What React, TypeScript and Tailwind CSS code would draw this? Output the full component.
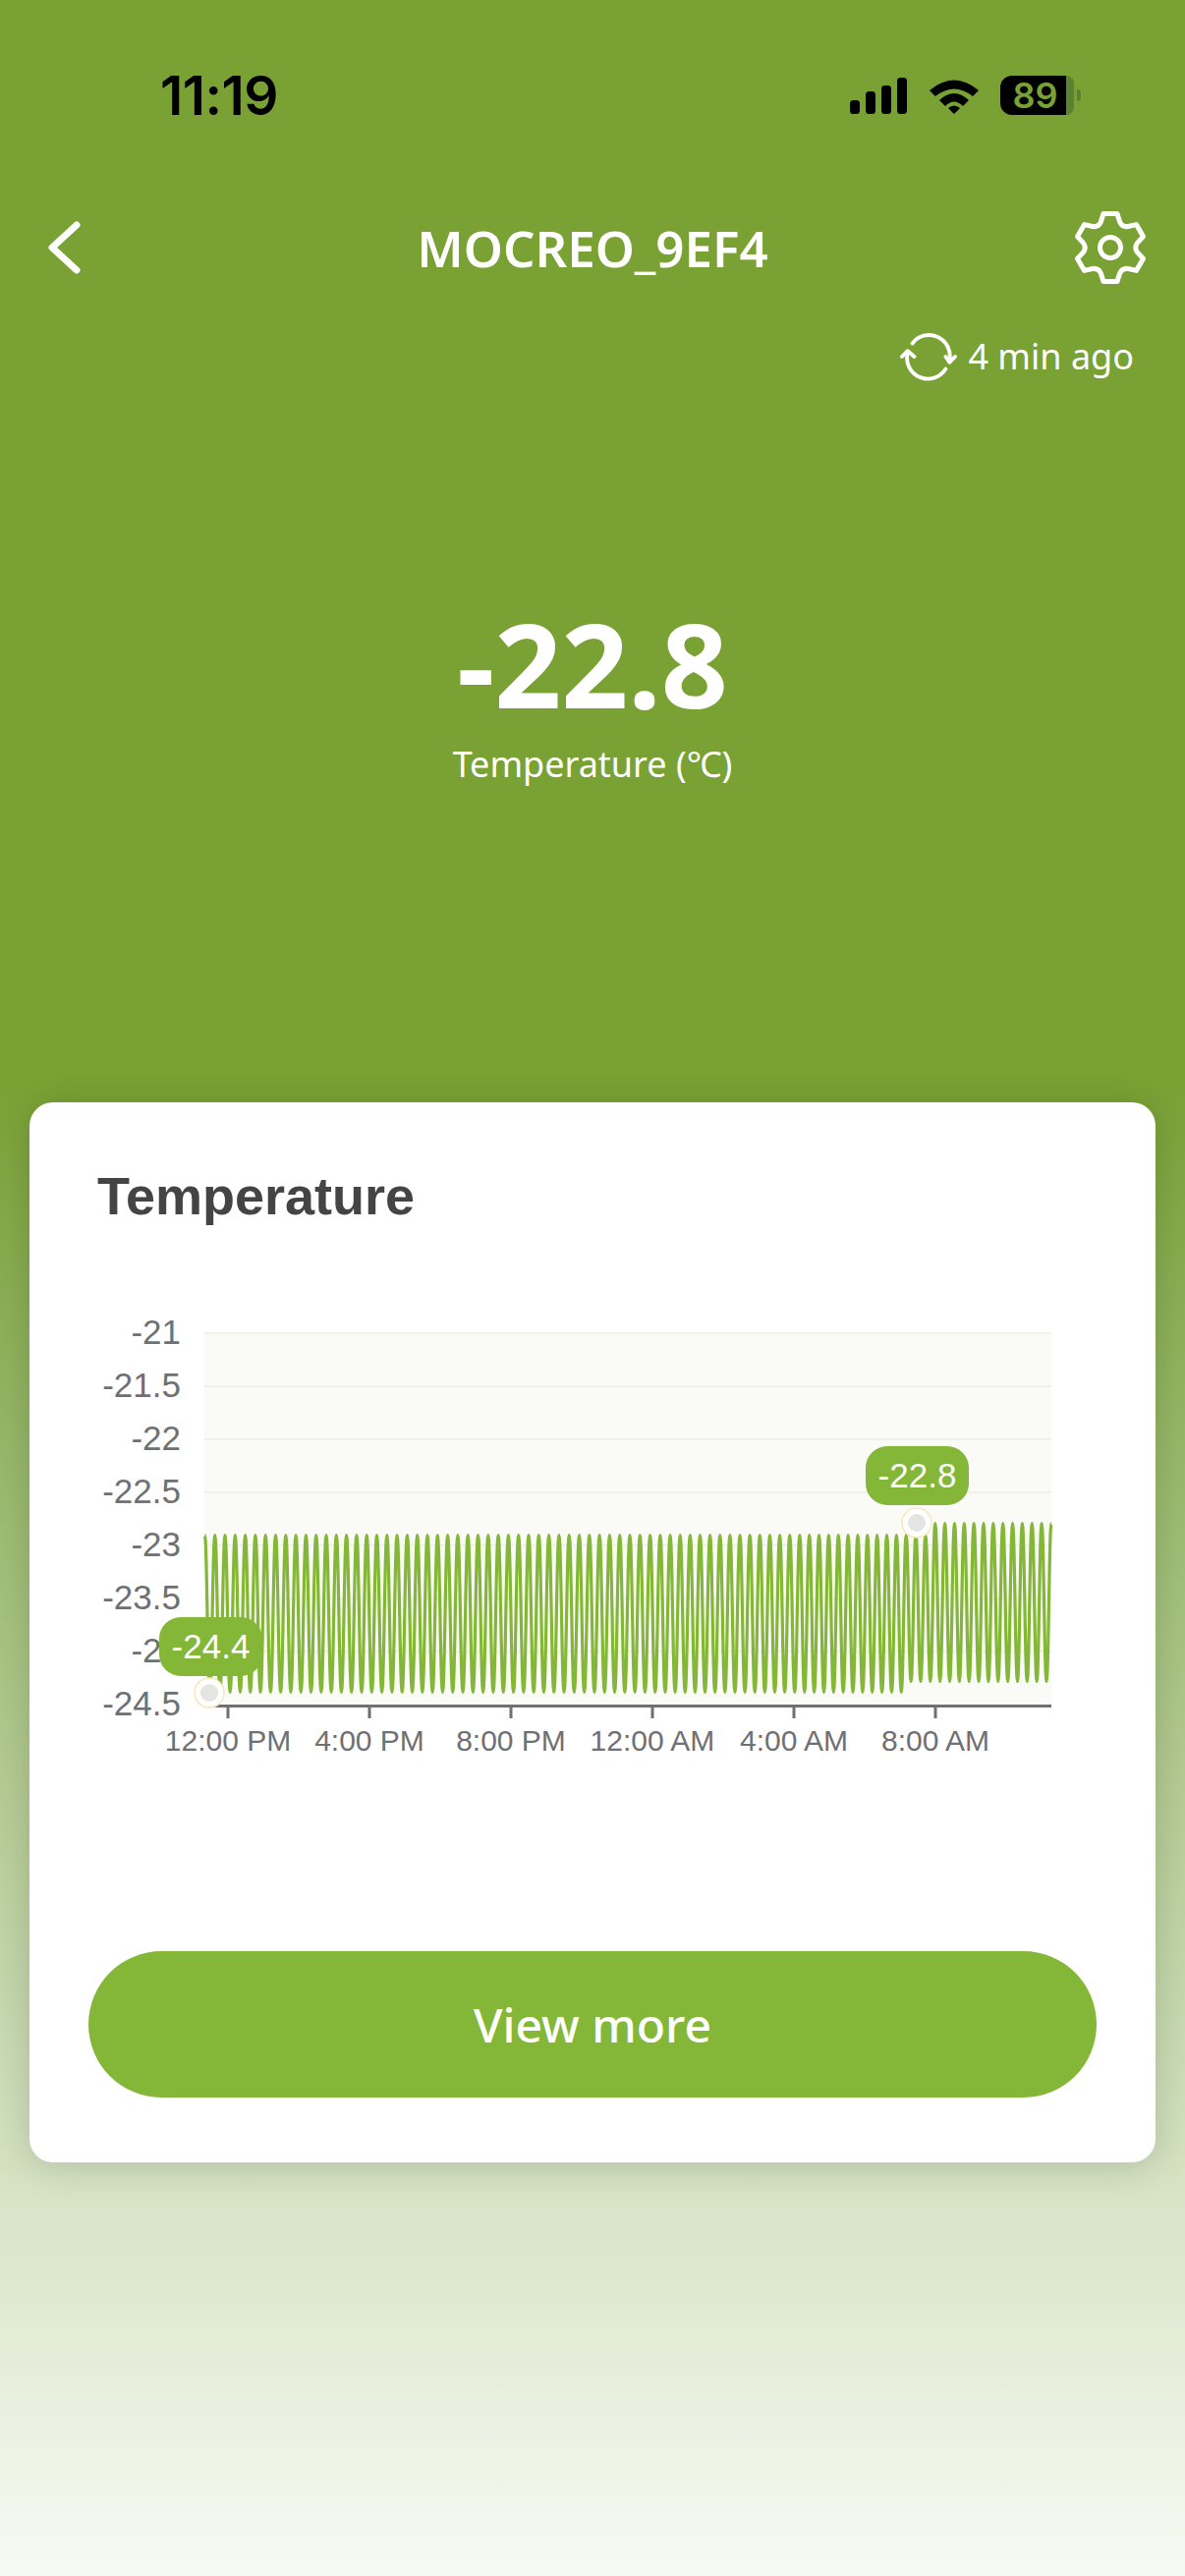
const Y_LABELS = ["-21", "-21.5", "-22", "-22.5", "-23", "-23.5", "-24", "-24.5"]
const X_TICKS = [
  { x: 232, label: "12:00 PM" },
  { x: 376, label: "4:00 PM" },
  { x: 520, label: "8:00 PM" },
  { x: 664, label: "12:00 AM" },
  { x: 808, label: "4:00 AM" },
  { x: 952, label: "8:00 AM" },
]
const GRID_Y = [1357, 1411, 1465, 1519, 1573, 1627, 1681]

// peaks are not evenly spaced in the source chart, period shrinks to the right
function buildPeaks() {
  const peaks = [208.4]
  let x = 218.7
  peaks.push(x)
  for (let i = 0; i < 44; i++) peaks.push((x += 10.3))
  for (let i = 0; i < 14; i++) peaks.push((x += 10.14))
  for (let i = 0; i < 26; i++) peaks.push((x += 9.85))
  return peaks
}

function buildWave() {
  const peaks = buildPeaks()
  const points: [number, number][] = []
  peaks.forEach((px, i) => {
    points.push([px, px > 948 ? 1550.5 : 1562.5])
    if (i < peaks.length - 1) {
      const tx = (px + peaks[i + 1]) / 2
      points.push([tx, tx > 924 ? 1711.5 : 1722.5])
    }
  })
  let d = `M${points[0][0]} ${points[0][1]}`
  for (let i = 1; i < points.length; i++) {
    const [x0, y0] = points[i - 1]
    const [x1, y1] = points[i]
    const dx = (x1 - x0) * 0.42
    d += ` C${(x0 + dx).toFixed(2)} ${y0} ${(x1 - dx).toFixed(2)} ${y1} ${x1.toFixed(2)} ${y1}`
  }
  return d
}

function buildGear(cx: number, cy: number) {
  const pt = (deg: number, r: number) => {
    const a = (deg * Math.PI) / 180
    return `${(cx + r * Math.cos(a)).toFixed(2)} ${(cy + r * Math.sin(a)).toFixed(2)}`
  }
  let d = ""
  for (let i = 0; i < 6; i++) {
    const a = -90 + i * 60
    d += `${i === 0 ? "M" : "L"}${pt(a - 20, 28)} L${pt(a - 11.5, 35.3)} L${pt(a + 11.5, 35.3)} L${pt(a + 20, 28)} Q${pt(a + 30, 24)} ${pt(a + 40, 28)} `
  }
  return d + "Z"
}

function StatusBar() {
  return (
    <div className="h-[194px] flex items-center justify-between pl-[163px] pr-[106px]">
      <span className="font-['Inter',sans-serif] font-semibold text-[55px] tracking-[-0.5px] text-black">11:19</span>
      <div className="flex items-center">
        <svg width="58" height="37" viewBox="0 0 58 37" className="mr-[23px]">
          <rect x="0" y="23" width="10" height="14" rx="3.5" />
          <rect x="16" y="14" width="10" height="23" rx="3.5" />
          <rect x="32" y="8" width="10" height="29" rx="3.5" />
          <rect x="48" y="0" width="10" height="37" rx="3.5" />
        </svg>
        <svg width="50" height="37" viewBox="0 0 50 37" className="mr-[22px]">
          <path d="M0 13 Q25 -8 50 13 L44 19 Q25 4 6 19 Z" />
          <path d="M10 23 Q25 9 40 23 L34 29 Q25 20 16 29 Z" />
          <path d="M19 31 Q25 26 31 31 L25 37 Z" />
        </svg>
        <div className="flex items-center">
          <div className="w-[67px] h-[40px] bg-black rounded-l-[12px] flex items-center justify-center font-['Inter',sans-serif] font-semibold text-[36px] text-[#79a133] pl-[4px]">
            89
          </div>
          <div className="w-[8px] h-[40px] bg-[#5b8230] rounded-r-[9px]" />
          <div className="ml-[3px] w-[4px] h-[12px] bg-[#5b8230] rounded-r-[4px]" />
        </div>
      </div>
    </div>
  )
}

function Header() {
  return (
    <div className="h-[116px] grid grid-cols-[1fr_auto_1fr] items-center px-[36px]">
      <svg width="36" height="54" viewBox="0 0 36 54" className="ml-[12px]" fill="none" stroke="white" strokeWidth="7" strokeLinecap="round" strokeLinejoin="round">
        <path d="M30 4 L5 27 L30 50" />
      </svg>
      <h1 className="font-['Noto_Sans',sans-serif] font-semibold text-[51px] leading-none text-white">MOCREO_9EF4</h1>
      <svg width="80" height="80" viewBox="0 0 80 80" className="justify-self-end" fill="none" stroke="white" strokeWidth="5" strokeLinejoin="round">
        <path d={buildGear(40, 40)} />
        <circle cx="40" cy="40" r="10.5" />
      </svg>
    </div>
  )
}

function SyncRow() {
  return (
    <div className="h-[106px] flex items-center justify-end gap-[11px] pr-[52px] text-white">
      <svg width="58" height="50" viewBox="0 0 60 50" fill="none" stroke="white" strokeWidth="4" strokeLinecap="round" strokeLinejoin="round">
        <path d="M13 11 A22 22 0 0 1 52 29" />
        <path d="M48 25 L52 31 L58 25" />
        <path d="M8 21 A22 22 0 0 0 48 38" />
        <path d="M2 25 L8 19 L15 25" />
      </svg>
      <span className="font-['Noto_Sans',sans-serif] text-[36px] leading-none">4 min ago</span>
    </div>
  )
}

function Tooltip({ value, className }: { value: string; className: string }) {
  return (
    <div className={`absolute w-[105px] h-[60px] rounded-[22px] bg-[#84b737] flex items-center justify-center font-['Liberation_Sans',sans-serif] text-[35px] text-white ${className}`}>
      {value}
    </div>
  )
}

function Chart() {
  return (
    <div className="relative h-[490px] mt-[45px]">
      <svg width="1146" height="490" viewBox="30 1310 1146 490" className="block font-['Liberation_Sans',sans-serif]">
        <rect x="208" y="1357" width="862" height="379" fill="#fafbf7" />
        {GRID_Y.map((y) => (
          <rect key={y} x="208" y={y - 1} width="862" height="2" fill="#eff1ea" />
        ))}
        <path d={buildWave()} fill="none" stroke="#84b737" strokeWidth="3.2" />
        <rect x="208" y="1735" width="862" height="3" fill="#6f7073" />
        {X_TICKS.map((t) => (
          <g key={t.x}>
            <rect x={t.x - 1.5} y="1736" width="3" height="13" fill="#6f7073" />
            <text x={t.x} y="1782" textAnchor="middle" fontSize="30" fill="#6f7073">
              {t.label}
            </text>
          </g>
        ))}
        {Y_LABELS.map((label, i) => (
          <text key={label} x="184" y={1368 + i * 54} textAnchor="end" fontSize="35" fill="#6f7073">
            {label}
          </text>
        ))}
        <circle cx="213" cy="1723" r="15" fill="white" stroke="#f6e7bf" strokeWidth="1.5" />
        <circle cx="213" cy="1723" r="9" fill="#e4e4e2" />
        <circle cx="933" cy="1550" r="15" fill="white" stroke="#f6e7bf" strokeWidth="1.5" />
        <circle cx="933" cy="1550" r="9" fill="#e4e4e2" />
      </svg>
      <Tooltip value="-24.4" className="left-[132px] top-[336px]" />
      <Tooltip value="-22.8" className="left-[851px] top-[162px]" />
    </div>
  )
}

export default function App() {
  return (
    <div className="w-[1206px] h-[2622px] overflow-hidden bg-gradient-to-b from-[#79a133] from-[42%] to-[#f8faf4]">
      <StatusBar />
      <Header />
      <SyncRow />

      <div className="mt-[188px] flex flex-col items-center text-white font-['Noto_Sans',sans-serif]">
        <div className="h-[143px] flex items-center font-bold text-[119px] leading-none">-22.8</div>
        <div className="h-[62px] flex items-center text-[36px] leading-none">Temperature (℃)</div>
      </div>

      <div className="mt-[313px] ml-[30px] w-[1146px] h-[1079px] bg-white rounded-[24px] shadow-[0_4px_36px_rgba(0,0,0,0.16)] flex flex-col">
        <h2 className="pl-[69px] pt-[63px] h-[143px] font-['Liberation_Sans',sans-serif] font-bold text-[54px] leading-[64px] text-[#444444]">
          Temperature
        </h2>
        <Chart />
        <button className="mx-[60px] mt-[186px] h-[149px] rounded-full bg-[#84b737] text-white font-['Noto_Sans',sans-serif] font-medium text-[48px] leading-none">
          View more
        </button>
      </div>
    </div>
  )
}
